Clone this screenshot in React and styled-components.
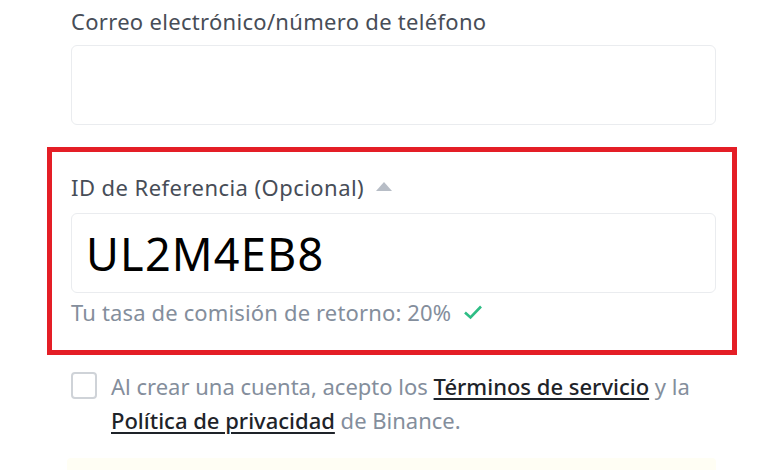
import React from "react";
import styled, { createGlobalStyle } from "styled-components";

const Global = createGlobalStyle`
  html, body { margin: 0; padding: 0; background: #ffffff; }
  body { font-family: "Noto Sans", "Open Sans", sans-serif; }
`;

const Page = styled.div`
  width: 780px;
  height: 470px;
  overflow: hidden;
  display: flex;
  flex-direction: column;
  padding-left: 47px;
  box-sizing: border-box;
`;

const Column = styled.div`
  width: 690px;
  display: flex;
  flex-direction: column;
`;

const Field = styled.div`
  display: flex;
  flex-direction: column;
  padding: ${(p) => p.$pad || "0 21px 0 24px"};
`;

const Label = styled.div`
  display: flex;
  align-items: center;
  gap: 12px;
  font-size: 22px;
  line-height: 24px;
  color: #474d57;
  letter-spacing: ${(p) => p.$ls || "0.3px"};
  margin: ${(p) => p.$m || "0"};
`;

const Caret = styled.span`
  width: 0;
  height: 0;
  border-left: 8px solid transparent;
  border-right: 8px solid transparent;
  border-bottom: 9px solid #b7bdc6;
  margin-top: -2px;
`;

const Input = styled.div`
  height: 80px;
  box-sizing: border-box;
  border: 1px solid #eaecef;
  border-radius: 6px;
  display: flex;
  align-items: center;
  padding-left: 14px;
`;

const Code = styled.span`
  font-family: "Noto Sans", sans-serif;
  font-size: 45px;
  color: #000;
  letter-spacing: 1.2px;
  line-height: 1;
`;

const RedBox = styled.div`
  margin-top: 22px;
  border: 5px solid #e41e26;
  padding: 23px 16px 26px 19px;
  display: flex;
  flex-direction: column;
`;

const Help = styled.div`
  display: flex;
  align-items: center;
  gap: 12px;
  margin-top: 7px;
  font-size: 22px;
  line-height: 24px;
  letter-spacing: 0.15px;
  color: #848e9c;
`;

const Agree = styled.div`
  display: flex;
  gap: 14px;
  margin-top: 15px;
  padding: 0 21px 0 24px;
`;

const Box = styled.div`
  flex: none;
  width: 26px;
  height: 27px;
  box-sizing: border-box;
  border: 2px solid #cfd3d8;
  border-radius: 4px;
  margin-top: 2px;
`;

const AgreeText = styled.div`
  font-size: 22px;
  line-height: 34px;
  color: #848e9c;
  margin-top: -1px;
`;

const Link = styled.a`
  color: #1e2329;
  font-weight: 500;
  text-decoration: underline;
  text-underline-offset: 3px;
  text-decoration-thickness: 2px;
`;

const Button = styled.div`
  margin: 21px 21px 0 20px;
  height: 40px;
  background: #fffef4;
  border-radius: 4px;
`;

export default function App() {
  return (
    <>
      <Global />
      <Page>
        <Column>
          <Field>
            <Label $m="9px 0 12px">Correo electrónico/número de teléfono</Label>
            <Input />
          </Field>
          <RedBox>
            <Field $pad="0">
              <Label $m="0 0 14px" $ls="0.45px">
                ID de Referencia (Opcional) <Caret />
              </Label>
              <Input>
                <Code>UL2M4EB8</Code>
              </Input>
              <Help>
                Tu tasa de comisión de retorno: 20%
                <svg width="20" height="16" viewBox="0 0 20 16">
                  <path d="M2 8.5 L7.5 13.5 L18 2.5" fill="none" stroke="#2ebd85" strokeWidth="2.6" />
                </svg>
              </Help>
            </Field>
          </RedBox>
          <Agree>
            <Box />
            <AgreeText>
              Al crear una cuenta, acepto los <Link>Términos de servicio</Link> y la
              <br />
              <Link>Política de privacidad</Link> de Binance.
            </AgreeText>
          </Agree>
          <Button />
        </Column>
      </Page>
    </>
  );
}
